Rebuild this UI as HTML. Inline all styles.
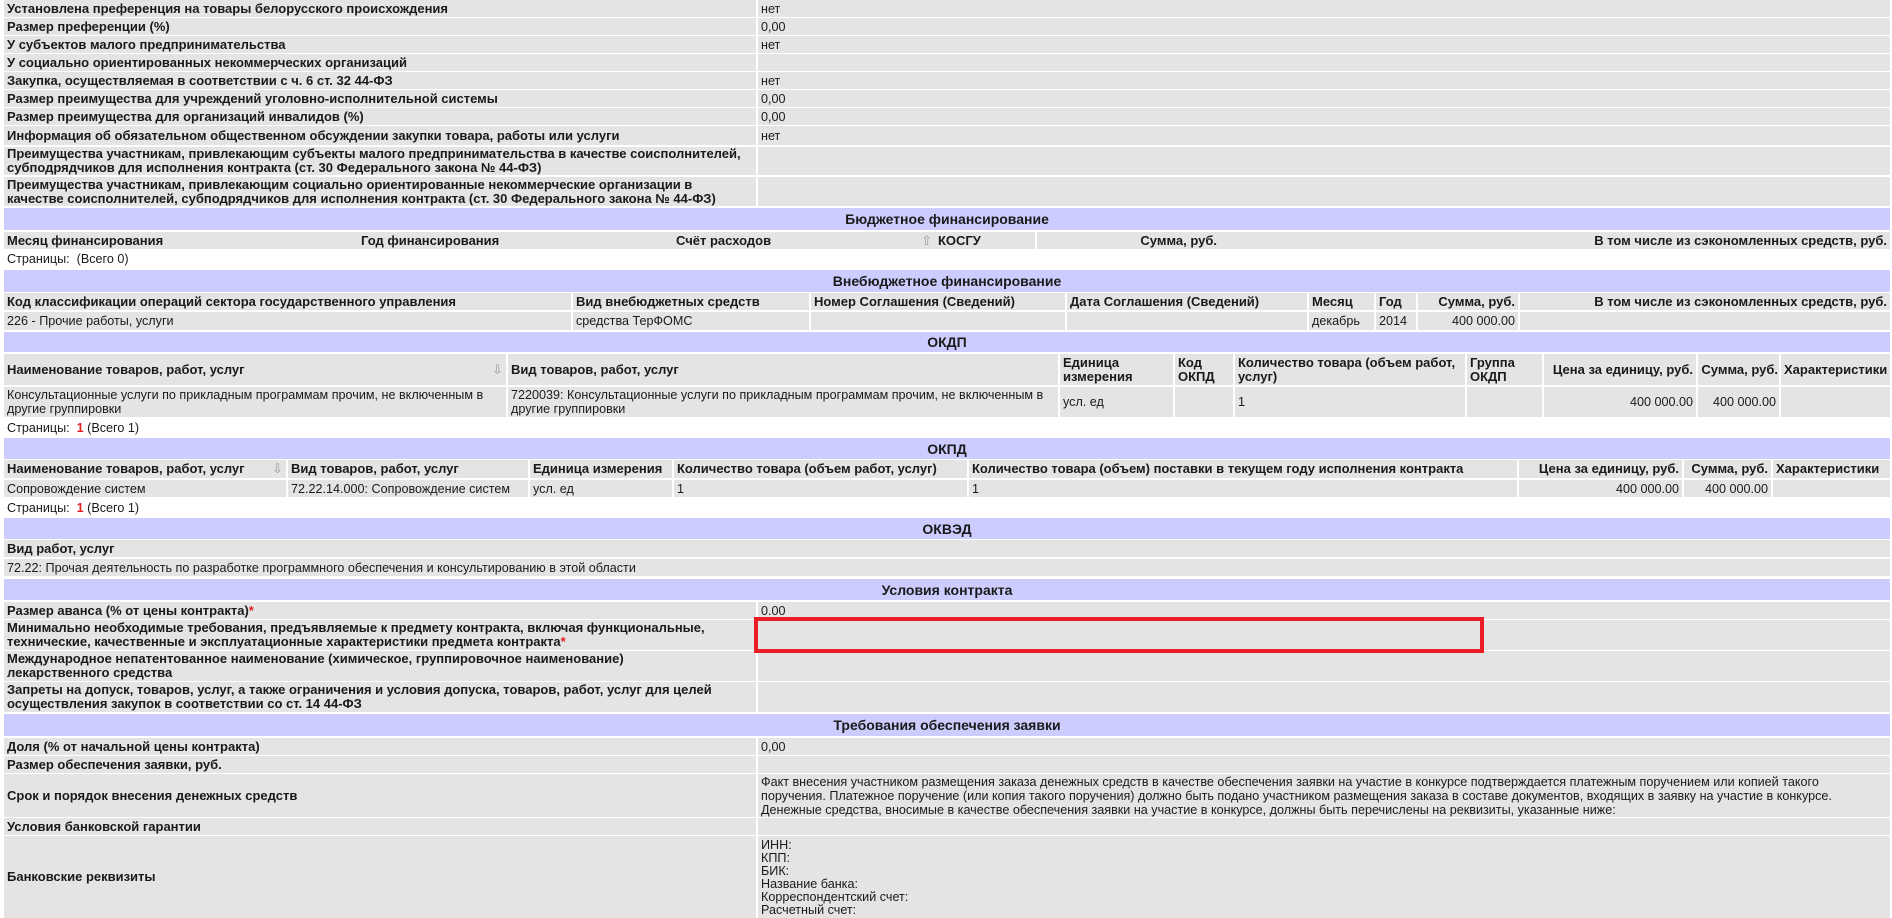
<!DOCTYPE html>
<html><head><meta charset="utf-8">
<style>
*{margin:0;padding:0;box-sizing:border-box}
body{width:1892px;height:918px;overflow:hidden;background:#fff;font-family:"Liberation Sans","DejaVu Sans",sans-serif;font-size:12.6px;color:#1a1a1a;position:relative}
.r{position:absolute;left:4px;width:1886px;display:flex}
.c{background:#e4e4e4;padding:0 3px;display:flex;align-items:center;overflow:hidden;border-right:2px solid #fff;line-height:14px;flex:none}
.c:last-child{border-right:none;flex:1}
.b{font-weight:bold;font-size:13px}
.rt{justify-content:flex-end;text-align:right;white-space:nowrap}
.h{background:#ccccff;justify-content:center;font-weight:bold;font-size:14px;flex:1}
.w{background:#fff}
.red{color:#e02020;font-weight:bold}
.st{color:#e02020}
.lab{width:754px}
</style></head><body>

<div class="r" style="top:0;height:17px"><div class="c b lab">Установлена преференция на товары белорусского происхождения</div><div class="c">нет</div></div>
<div class="r" style="top:18px;height:17px"><div class="c b lab">Размер преференции (%)</div><div class="c">0,00</div></div>
<div class="r" style="top:36px;height:17px"><div class="c b lab">У субъектов малого предпринимательства</div><div class="c">нет</div></div>
<div class="r" style="top:54px;height:17px"><div class="c b lab">У социально ориентированных некоммерческих организаций</div><div class="c"></div></div>
<div class="r" style="top:72px;height:17px"><div class="c b lab">Закупка, осуществляемая в соответствии с ч. 6 ст. 32 44-ФЗ</div><div class="c">нет</div></div>
<div class="r" style="top:90px;height:17px"><div class="c b lab">Размер преимущества для учреждений уголовно-исполнительной системы</div><div class="c">0,00</div></div>
<div class="r" style="top:108px;height:17px"><div class="c b lab">Размер преимущества для организаций инвалидов (%)</div><div class="c">0,00</div></div>
<div class="r" style="top:126px;height:19px"><div class="c b lab">Информация об обязательном общественном обсуждении закупки товара, работы или услуги</div><div class="c">нет</div></div>
<div class="r" style="top:147px;height:28px"><div class="c b lab">Преимущества участникам, привлекающим субъекты малого предпринимательства в качестве соисполнителей, субподрядчиков для исполнения контракта (ст. 30 Федерального закона № 44-ФЗ)</div><div class="c"></div></div>
<div class="r" style="top:177px;height:29px"><div class="c b lab"><div>Преимущества участникам, привлекающим социально ориентированные некоммерческие организации в<br>качестве соисполнителей, субподрядчиков для исполнения контракта (ст. 30 Федерального закона № 44-ФЗ)</div></div><div class="c"></div></div>

<div class="r" style="top:208px;height:22px"><div class="c h">Бюджетное финансирование</div></div>
<div class="r" style="top:232px;height:17px"><div class="c b" style="width:354px;border:none">Месяц финансирования</div><div class="c b" style="width:315px;border:none">Год финансирования</div><div class="c b" style="width:262px;border:none;justify-content:space-between"><span>Счёт расходов</span><span style="color:#999;font-weight:normal">⇧</span></div><div class="c b" style="width:102px">КОСГУ</div><div class="c b rt" style="width:183px;border:none">Сумма, руб.</div><div class="c b rt">В том числе из сэкономленных средств, руб.</div></div>
<div class="r" style="top:249px;height:20px"><div class="c w"><div>Страницы:&nbsp; (Всего 0)</div></div></div>

<div class="r" style="top:270px;height:22px"><div class="c h">Внебюджетное финансирование</div></div>
<div class="r" style="top:293px;height:17px"><div class="c b" style="width:569px">Код классификации операций сектора государственного управления</div><div class="c b" style="width:238px">Вид внебюджетных средств</div><div class="c b" style="width:256px">Номер Соглашения (Сведений)</div><div class="c b" style="width:242px">Дата Соглашения (Сведений)</div><div class="c b" style="width:67px">Месяц</div><div class="c b" style="width:42px">Год</div><div class="c b rt" style="width:102px">Сумма, руб.</div><div class="c b rt">В том числе из сэкономленных средств, руб.</div></div>
<div class="r" style="top:312px;height:18px"><div class="c" style="width:569px">226 - Прочие работы, услуги</div><div class="c" style="width:238px">средства ТерФОМС</div><div class="c" style="width:256px"></div><div class="c" style="width:242px"></div><div class="c" style="width:67px">декабрь</div><div class="c" style="width:42px">2014</div><div class="c rt" style="width:102px">400 000.00</div><div class="c"></div></div>

<div class="r" style="top:332px;height:20px"><div class="c h">ОКДП</div></div>
<div class="r" style="top:354px;height:31px"><div class="c b" style="width:504px;justify-content:space-between"><span>Наименование товаров, работ, услуг</span><span style="color:#999;font-weight:normal">⇩</span></div><div class="c b" style="width:552px">Вид товаров, работ, услуг</div><div class="c b" style="width:115px"><div>Единица<br>измерения</div></div><div class="c b" style="width:60px"><div>Код<br>ОКПД</div></div><div class="c b" style="width:232px">Количество товара (объем работ, услуг)</div><div class="c b" style="width:77px"><div>Группа<br>ОКДП</div></div><div class="c b rt" style="width:154px">Цена за единицу, руб.</div><div class="c b rt" style="width:83px;padding:0 1px">Сумма, руб.</div><div class="c b">Характеристики</div></div>
<div class="r" style="top:387px;height:30px"><div class="c" style="width:504px">Консультационные услуги по прикладным программам прочим, не включенным в другие группировки</div><div class="c" style="width:552px">7220039: Консультационные услуги по прикладным программам прочим, не включенным в другие группировки</div><div class="c" style="width:115px">усл. ед</div><div class="c" style="width:60px"></div><div class="c" style="width:232px">1</div><div class="c" style="width:77px"></div><div class="c rt" style="width:154px">400 000.00</div><div class="c rt" style="width:83px">400 000.00</div><div class="c"></div></div>
<div class="r" style="top:418px;height:19px"><div class="c w"><div>Страницы:&nbsp; <span class="red">1</span> (Всего 1)</div></div></div>

<div class="r" style="top:438px;height:21px"><div class="c h">ОКПД</div></div>
<div class="r" style="top:460px;height:18px"><div class="c b" style="width:284px;justify-content:space-between"><span>Наименование товаров, работ, услуг</span><span style="color:#999;font-weight:normal">⇩</span></div><div class="c b" style="width:242px">Вид товаров, работ, услуг</div><div class="c b" style="width:144px">Единица измерения</div><div class="c b" style="width:295px">Количество товара (объем работ, услуг)</div><div class="c b" style="width:550px">Количество товара (объем) поставки в текущем году исполнения контракта</div><div class="c b rt" style="width:165px">Цена за единицу, руб.</div><div class="c b rt" style="width:89px">Сумма, руб.</div><div class="c b">Характеристики</div></div>
<div class="r" style="top:480px;height:17px"><div class="c" style="width:284px">Сопровождение систем</div><div class="c" style="width:242px">72.22.14.000: Сопровождение систем</div><div class="c" style="width:144px">усл. ед</div><div class="c" style="width:295px">1</div><div class="c" style="width:550px">1</div><div class="c rt" style="width:165px">400 000.00</div><div class="c rt" style="width:89px">400 000.00</div><div class="c"></div></div>
<div class="r" style="top:498px;height:19px"><div class="c w"><div>Страницы:&nbsp; <span class="red">1</span> (Всего 1)</div></div></div>

<div class="r" style="top:518px;height:21px"><div class="c h">ОКВЭД</div></div>
<div class="r" style="top:540px;height:17px"><div class="c b">Вид работ, услуг</div></div>
<div class="r" style="top:559px;height:17px"><div class="c">72.22: Прочая деятельность по разработке программного обеспечения и консультированию в этой области</div></div>

<div class="r" style="top:579px;height:21px"><div class="c h">Условия контракта</div></div>
<div class="r" style="top:602px;height:17px"><div class="c b lab"><div>Размер аванса (% от цены контракта)<span class="st">*</span></div></div><div class="c">0.00</div></div>
<div class="r" style="top:620px;height:30px"><div class="c b lab"><div>Минимально необходимые требования, предъявляемые к предмету контракта, включая функциональные, технические, качественные и эксплуатационные характеристики предмета контракта<span class="st">*</span></div></div><div class="c"></div></div>
<div class="r" style="top:651px;height:30px"><div class="c b lab"><div>Международное непатентованное наименование (химическое, группировочное наименование)<br>лекарственного средства</div></div><div class="c"></div></div>
<div class="r" style="top:682px;height:30px"><div class="c b lab">Запреты на допуск, товаров, услуг, а также ограничения и условия допуска, товаров, работ, услуг для целей осуществления закупок в соответствии со ст. 14 44-ФЗ</div><div class="c"></div></div>

<div class="r" style="top:714px;height:22px"><div class="c h">Требования обеспечения заявки</div></div>
<div class="r" style="top:738px;height:17px"><div class="c b lab">Доля (% от начальной цены контракта)</div><div class="c">0,00</div></div>
<div class="r" style="top:756px;height:17px"><div class="c b lab">Размер обеспечения заявки, руб.</div><div class="c"></div></div>
<div class="r" style="top:774px;height:43px"><div class="c b lab">Срок и порядок внесения денежных средств</div><div class="c" style="padding-right:20px">Факт внесения участником размещения заказа денежных средств в качестве обеспечения заявки на участие в конкурсе подтверждается платежным поручением или копией такого поручения. Платежное поручение (или копия такого поручения) должно быть подано участником размещения заказа в составе документов, входящих в заявку на участие в конкурсе. Денежные средства, вносимые в качестве обеспечения заявки на участие в конкурсе, должны быть перечислены на реквизиты, указанные ниже:</div></div>
<div class="r" style="top:818px;height:17px"><div class="c b lab">Условия банковской гарантии</div><div class="c"></div></div>
<div class="r" style="top:836px;height:82px"><div class="c b lab">Банковские реквизиты</div><div class="c" style="align-items:flex-start;padding-top:3px;line-height:13px"><div>ИНН:<br>КПП:<br>БИК:<br>Название банка:<br>Корреспондентский счет:<br>Расчетный счет:</div></div></div>

<div style="position:absolute;left:754px;top:617px;width:730px;height:36px;border:4px solid #ec1c24"></div>
</body></html>
